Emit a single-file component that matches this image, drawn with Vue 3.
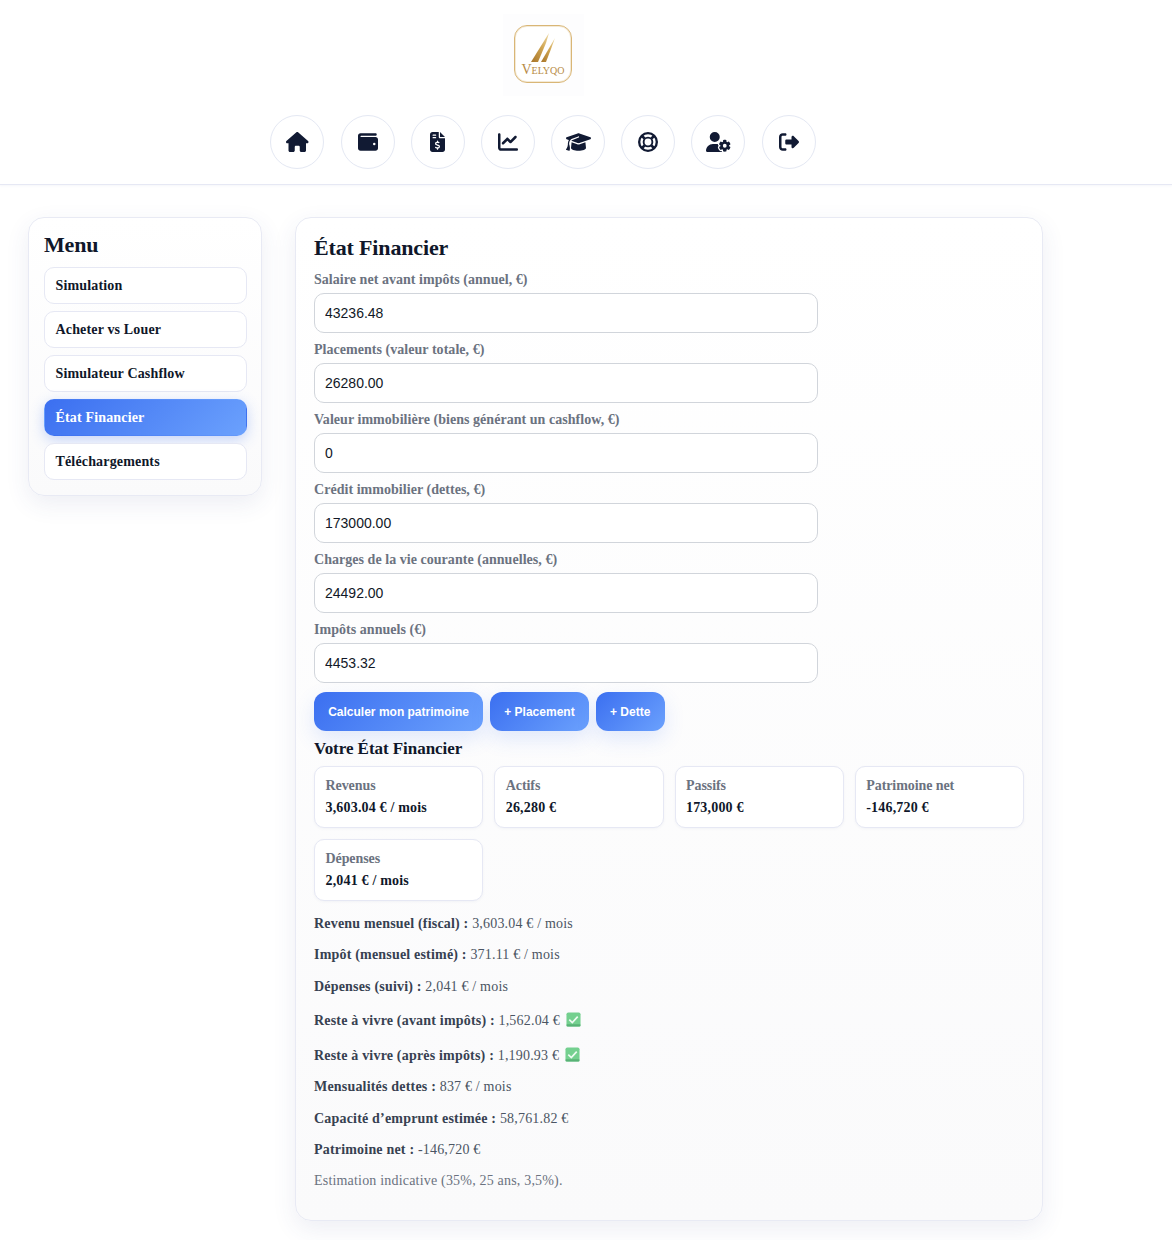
<template>
  <div class="page">
    <header class="header">
      <div class="logo">
        <div class="logo-mark">
          <svg class="logo-slashes" viewBox="0 0 24 29">
            <defs>
              <linearGradient id="gold" x1="0" y1="1" x2="1" y2="0">
                <stop offset="0" stop-color="#a8752a" />
                <stop offset="0.55" stop-color="#cfa450" />
                <stop offset="1" stop-color="#f0dca8" />
              </linearGradient>
            </defs>
            <polygon points="0,29 18,0 15,10 7,29" fill="url(#gold)" />
            <polygon points="10,29 24,5 20,16 15,29" fill="url(#gold)" />
          </svg>
          <span class="logo-text">Velyqo</span>
        </div>
      </div>
      <nav class="nav">
        <a v-for="icon in icons" :key="icon.name" class="nav-btn" :title="icon.name">
          <svg :viewBox="icon.box" class="nav-icon">
            <path v-if="icon.d" :d="icon.d" fill="currentColor" />
            <g v-else fill="none" stroke="currentColor">
              <circle cx="256" cy="256" r="226" stroke-width="60" />
              <circle cx="256" cy="256" r="112" stroke-width="48" />
              <path d="M90 90L170 170M422 90L342 170M90 422L170 342M422 422L342 342" stroke-width="70" />
            </g>
          </svg>
        </a>
      </nav>
    </header>

    <div class="layout">
      <aside class="sidebar">
        <h2>Menu</h2>
        <button
          v-for="item in menu"
          :key="item"
          class="menu-item"
          :class="{ active: item === current }"
          @click="current = item"
        >
          {{ item }}
        </button>
      </aside>

      <main class="panel">
        <h2>État Financier</h2>
        <div class="form">
          <div v-for="field in fields" :key="field.label" class="field">
            <label>{{ field.label }}</label>
            <input v-model="field.value" type="text" />
          </div>
        </div>
        <div class="actions">
          <button>Calculer mon patrimoine</button>
          <button>+ Placement</button>
          <button>+ Dette</button>
        </div>

        <h3>Votre État Financier</h3>
        <div class="stats">
          <div v-for="stat in stats" :key="stat.label" class="stat">
            <div class="stat-label">{{ stat.label }}</div>
            <div class="stat-value">{{ stat.value }}</div>
          </div>
        </div>

        <p v-for="row in rows" :key="row.label" class="row" :class="{ checked: row.ok }">
          <strong>{{ row.label }} :</strong> {{ row.value }}
          <svg v-if="row.ok" class="check" viewBox="0 0 16 16">
            <rect x="0.5" y="0.5" width="15" height="15" rx="2" fill="#74d08f" />
            <rect x="0.5" y="13" width="15" height="2.5" rx="1" fill="#58b276" />
            <path d="M3.5 8.2L6.7 11.2L12.5 5" fill="none" stroke="#eefbf2" stroke-width="1.8" />
          </svg>
        </p>
        <p class="row note">Estimation indicative (35%, 25 ans, 3,5%).</p>
      </main>
    </div>
  </div>
</template>

<script setup>
import { ref, reactive } from "vue";

const icons = [
  {
    name: "Accueil",
    box: "0 0 576 512",
    d: "M575.8 255.5c0 18-15 32.1-32 32.1h-32l.7 160.2c0 2.7-.2 5.4-.5 8.1V472c0 22.1-17.9 40-40 40H456c-1.1 0-2.2 0-3.3-.1c-1.4 .1-2.8 .1-4.2 .1H416 392c-22.1 0-40-17.9-40-40V448 384c0-17.7-14.3-32-32-32H256c-17.7 0-32 14.3-32 32v64 24c0 22.1-17.9 40-40 40H160 128.1c-1.5 0-3-.1-4.5-.2c-1.2 .1-2.4 .2-3.6 .2H104c-22.1 0-40-17.9-40-40V360c0-.9 0-1.9 .1-2.8V287.6H32c-18 0-32-14-32-32.1c0-9 3-17 10-24L266.4 8c7-7 15-8 22-8s15 2 21 7L564.8 231.5c8 7 12 15 11 24z",
  },
  {
    name: "Portefeuille",
    box: "0 0 512 512",
    d: "M64 32C28.7 32 0 60.7 0 96V416c0 35.3 28.7 64 64 64H448c35.3 0 64-28.7 64-64V192c0-35.3-28.7-64-64-64H80c-8.8 0-16-7.2-16-16s7.2-16 16-16H448c17.7 0 32-14.3 32-32s-14.3-32-32-32H64zM416 272a32 32 0 1 1 0 64 32 32 0 1 1 0-64z",
  },
  {
    name: "Factures",
    box: "0 0 384 512",
    d: "M64 0C28.7 0 0 28.7 0 64V448c0 35.3 28.7 64 64 64H320c35.3 0 64-28.7 64-64V160H256c-17.7 0-32-14.3-32-32V0H64zM256 0V128H384L256 0zM64 80c0-8.8 7.2-16 16-16h64c8.8 0 16 7.2 16 16s-7.2 16-16 16H80c-8.8 0-16-7.2-16-16zm0 64c0-8.8 7.2-16 16-16h64c8.8 0 16 7.2 16 16s-7.2 16-16 16H80c-8.8 0-16-7.2-16-16zm128 72c8.8 0 16 7.2 16 16v17.3c8.5 1.2 16.7 3.1 24.1 5.1c8.5 2.3 13.6 11 11.3 19.6s-11 13.6-19.6 11.3c-11.1-3-22-5.2-32.1-5.3c-8.4-.1-17.4 1.8-23.6 5.5c-5.7 3.4-8.1 7.3-8.1 12.8c0 3.7 1.3 6.5 7.3 10.1c6.9 4.1 16.6 7.1 29.2 10.9l.5 .1 0 0 0 0c11.3 3.4 25.3 7.6 36.3 14.6c12.1 7.6 22.4 19.7 22.7 38.2c.3 19.3-9.6 33.3-22.9 41.6c-7.7 4.8-16.4 7.6-25.1 9.1V440c0 8.8-7.2 16-16 16s-16-7.2-16-16V422.2c-11.2-2.1-21.7-5.7-30.9-8.9l0 0c-2.1-.7-4.2-1.4-6.2-2.1c-8.4-2.8-12.9-11.9-10.1-20.2s11.9-12.9 20.2-10.1c2.5 .8 4.8 1.6 7.1 2.4l0 0 0 0 0 0c13.6 4.6 24.6 8.4 36.3 8.7c9.1 .3 17.9-1.7 23.7-5.3c5.1-3.2 7.9-7.3 7.8-14c-.1-4.6-1.8-7.8-7.7-11.6c-6.8-4.3-16.5-7.4-29-11.2l-1.6-.5 0 0c-11-3.3-24.3-7.3-34.8-13.7c-12-7.2-22.6-18.9-22.7-37.3c-.1-19.4 10.8-32.8 23.8-40.5c7.5-4.4 15.8-7.2 24.1-8.7V232c0-8.8 7.2-16 16-16z",
  },
  {
    name: "Graphiques",
    box: "0 0 512 512",
    d: "M64 64c0-17.7-14.3-32-32-32S0 46.3 0 64V400c0 44.2 35.8 80 80 80H480c17.7 0 32-14.3 32-32s-14.3-32-32-32H80c-8.8 0-16-7.2-16-16V64zm406.6 86.6c12.5-12.5 12.5-32.8 0-45.3s-32.8-12.5-45.3 0L320 210.7l-57.4-57.4c-12.5-12.5-32.8-12.5-45.3 0l-112 112c-12.5 12.5-12.5 32.8 0 45.3s32.8 12.5 45.3 0L240 221.3l57.4 57.4c12.5 12.5 32.8 12.5 45.3 0l128-128z",
  },
  {
    name: "Formation",
    box: "0 0 640 512",
    d: "M320 32c-8.1 0-16.1 1.4-23.7 4.1L15.8 137.4C6.3 140.9 0 149.9 0 160s6.3 19.1 15.8 22.6l57.9 20.9C57.3 229.3 48 259.8 48 291.9v28.1c0 28.4-10.8 57.7-22.3 80.8c-6.5 13-13.9 25.8-22.5 37.6C0 442.7-.9 448.3 .9 453.4s6 8.9 11.2 10.2l64 16c4.2 1.1 8.7 .3 12.4-2s6.3-6.1 7.1-10.4c8.6-42.8 4.3-81.2-2.1-108.7C90.3 344.3 86 329.8 80 316.5V291.9c0-30.2 10.2-58.7 27.9-81.5c12.9-15.5 29.6-28 49.2-35.7l157-61.7c8.2-3.2 17.5 .8 20.7 9s-.8 17.5-9 20.7l-157 61.7c-12.4 4.9-23.3 12.4-32.2 21.6l159.6 57.6c7.6 2.7 15.6 4.1 23.7 4.1s16.1-1.4 23.7-4.1L624.2 182.6c9.5-3.4 15.8-12.5 15.8-22.6s-6.3-19.1-15.8-22.6L343.7 36.1C336.1 33.4 328.1 32 320 32zM128 408c0 35.3 86 72 192 72s192-36.7 192-72L496.7 262.6 354.5 314c-11.1 4-22.8 6-34.5 6s-23.5-2-34.5-6L143.3 262.6 128 408z",
  },
  { name: "Aide", box: "0 0 512 512" },
  {
    name: "Compte",
    box: "0 0 640 512",
    d: "M224 0a128 128 0 1 1 0 256A128 128 0 1 1 224 0zM178.3 304h91.4c11.8 0 23.4 1.2 34.5 3.3c-2.1 18.5 7.4 35.6 21.8 44.8c-16.6 10.6-26.7 31.6-20 53.3c4 12.9 9.4 25.5 16.4 37.6s15.2 23.1 24.4 33c15.7 16.9 39.6 18.4 57.2 8.7v.9c0 9.2 2.7 18.5 7.9 26.3H29.7C13.3 512 0 498.7 0 482.3C0 383.8 79.8 304 178.3 304zM436 218.2c0-7 4.5-13.3 11.3-14.8c10.5-2.4 21.5-3.7 32.7-3.7s22.2 1.3 32.7 3.7c6.8 1.5 11.3 7.8 11.3 14.8v30.6c7.9 3.4 15.4 7.7 22.3 12.8l24.9-14.3c6.1-3.5 13.7-2.7 18.5 2.4c7.6 8.1 14.3 17.2 20.1 27.2s10.3 20.4 13.5 31c2.1 6.7-1.1 13.7-7.2 17.2l-25 14.4c.4 4 .7 8.1 .7 12.3s-.2 8.2-.7 12.3l25 14.4c6.1 3.5 9.2 10.5 7.2 17.2c-3.3 10.6-7.8 21-13.5 31s-12.5 19.1-20.1 27.2c-4.8 5.1-12.5 5.9-18.5 2.4l-24.9-14.3c-6.9 5.1-14.3 9.4-22.3 12.8l0 30.6c0 7-4.5 13.3-11.3 14.8c-10.5 2.4-21.5 3.7-32.7 3.7s-22.2-1.3-32.7-3.7c-6.8-1.5-11.3-7.8-11.3-14.8V454.8c-8-3.4-15.6-7.7-22.5-12.9l-24.7 14.3c-6.1 3.5-13.7 2.7-18.5-2.4c-7.6-8.1-14.3-17.2-20.1-27.2s-10.3-20.4-13.5-31c-2.1-6.7 1.1-13.7 7.2-17.2l24.8-14.3c-.4-4.1-.7-8.2-.7-12.4s.2-8.3 .7-12.4L343.8 325c-6.1-3.5-9.2-10.5-7.2-17.2c3.3-10.6 7.7-21 13.5-31s12.5-19.1 20.1-27.2c4.8-5.1 12.4-5.9 18.5-2.4l24.8 14.3c6.9-5.1 14.5-9.4 22.5-12.9V218.2zm92.1 133.5a48.1 48.1 0 1 0 -96.1 0 48.1 48.1 0 1 0 96.1 0z",
  },
  {
    name: "Déconnexion",
    box: "0 0 512 512",
    d: "M377.9 105.9L500.7 228.7c7.2 7.2 11.3 17.1 11.3 27.3s-4.1 20.1-11.3 27.3L377.9 406.1c-6.4 6.4-15 9.9-24 9.9c-18.7 0-33.9-15.2-33.9-33.9l0-62.1-128 0c-17.7 0-32-14.3-32-32l0-64c0-17.7 14.3-32 32-32l128 0 0-62.1c0-18.7 15.2-33.9 33.9-33.9c9 0 17.6 3.6 24 9.9zM160 96L96 96c-17.7 0-32 14.3-32 32l0 256c0 17.7 14.3 32 32 32l64 0c17.7 0 32 14.3 32 32s-14.3 32-32 32l-64 0c-53 0-96-43-96-96L0 128C0 75 43 32 96 32l64 0c17.7 0 32 14.3 32 32s-14.3 32-32 32z",
  },
];

const menu = ["Simulation", "Acheter vs Louer", "Simulateur Cashflow", "État Financier", "Téléchargements"];
const current = ref("État Financier");

const fields = reactive([
  { label: "Salaire net avant impôts (annuel, €)", value: "43236.48" },
  { label: "Placements (valeur totale, €)", value: "26280.00" },
  { label: "Valeur immobilière (biens générant un cashflow, €)", value: "0" },
  { label: "Crédit immobilier (dettes, €)", value: "173000.00" },
  { label: "Charges de la vie courante (annuelles, €)", value: "24492.00" },
  { label: "Impôts annuels (€)", value: "4453.32" },
]);

const stats = [
  { label: "Revenus", value: "3,603.04 € / mois" },
  { label: "Actifs", value: "26,280 €" },
  { label: "Passifs", value: "173,000 €" },
  { label: "Patrimoine net", value: "-146,720 €" },
  { label: "Dépenses", value: "2,041 € / mois" },
];

const rows = [
  { label: "Revenu mensuel (fiscal)", value: "3,603.04 € / mois" },
  { label: "Impôt (mensuel estimé)", value: "371.11 € / mois" },
  { label: "Dépenses (suivi)", value: "2,041 € / mois" },
  { label: "Reste à vivre (avant impôts)", value: "1,562.04 €", ok: true },
  { label: "Reste à vivre (après impôts)", value: "1,190.93 €", ok: true },
  { label: "Mensualités dettes", value: "837 € / mois" },
  { label: "Capacité d’emprunt estimée", value: "58,761.82 €" },
  { label: "Patrimoine net", value: "-146,720 €" },
];
</script>

<style>
body {
  background: #fff;
}
</style>

<style scoped>
.page {
  font-family: "Liberation Serif", "Times New Roman", serif;
  color: #0f172a;
  padding-bottom: 19px;
}

.header {
  display: flex;
  flex-direction: column;
  align-items: center;
  padding: 14px 86px 15px 0;
  border-bottom: 1px solid #e6e8f4;
  box-shadow: 0 1px 2px rgba(90, 100, 170, 0.06);
}

.logo {
  width: 81px;
  height: 82px;
  box-sizing: border-box;
  padding-bottom: 2px;
  display: flex;
  align-items: center;
  justify-content: center;
  background: #fdfdfe;
}

.logo-mark {
  width: 58px;
  height: 58px;
  box-sizing: border-box;
  border: 1px solid #d9b676;
  border-radius: 13px;
  background: #fff;
  display: flex;
  flex-direction: column;
  align-items: center;
  box-shadow: inset 0 0 0 1px rgba(220, 185, 124, 0.3);
}

.logo-slashes {
  width: 24px;
  height: 29px;
  margin-top: 7px;
}

.logo-text {
  font-size: 14px;
  line-height: 12px;
  margin-top: 2px;
  color: #b78b45;
  font-variant: small-caps;
}

.nav {
  display: flex;
  gap: 16.17px;
  margin-top: 19px;
}

.nav-btn {
  width: 54px;
  height: 54px;
  box-sizing: border-box;
  border: 1px solid #e4e8f3;
  border-radius: 50%;
  background: #fff;
  display: flex;
  align-items: center;
  justify-content: center;
  color: #111a33;
}

.nav-icon {
  height: 20px;
  display: block;
}

.layout {
  display: flex;
  align-items: flex-start;
  gap: 33px;
  padding: 32px 0 0 28px;
}

.sidebar,
.panel {
  box-sizing: border-box;
  background: linear-gradient(180deg, #ffffff 0%, #fafafb 100%);
  border: 1px solid #e8eaf4;
  box-shadow: 0 8px 24px rgba(60, 70, 130, 0.09);
}

.sidebar {
  width: 234px;
  padding: 14px 14px 15px 15px;
  border-radius: 16px;
  display: flex;
  flex-direction: column;
  gap: 7px;
}

.sidebar h2 {
  margin: 0 0 3px;
  font-size: 22px;
  line-height: 25px;
  letter-spacing: -0.2px;
}

.menu-item {
  height: 37px;
  box-sizing: border-box;
  padding: 0 10.5px;
  text-align: left;
  font-family: inherit;
  font-size: 14px;
  font-weight: 700;
  letter-spacing: 0.16px;
  color: #0f172a;
  background: #fff;
  border: 1px solid #e6e8f4;
  border-radius: 10px;
  cursor: pointer;
}

.menu-item.active {
  color: #fff;
  border-color: transparent;
  background: linear-gradient(135deg, #3b6ff0 0%, #6ba1fd 100%);
  box-shadow: 0 4px 14px rgba(59, 111, 240, 0.28);
}

.panel {
  width: 748px;
  padding: 17px 18px 30px;
  border-radius: 16px;
}

.panel h2 {
  margin: 0;
  font-size: 22px;
  line-height: 26px;
  letter-spacing: -0.15px;
}

.form {
  margin-top: 11px;
  display: flex;
  flex-direction: column;
  gap: 9px;
}

.field {
  display: flex;
  flex-direction: column;
  gap: 5px;
}

.field label {
  font-size: 14px;
  line-height: 16px;
  font-weight: 700;
  letter-spacing: 0.04px;
  color: #6b7280;
}

.field input {
  width: 504px;
  height: 40px;
  box-sizing: border-box;
  padding: 0 10px;
  font-family: "Liberation Sans", Arial, sans-serif;
  font-size: 14px;
  color: #111827;
  background: #fff;
  border: 1px solid #d1d5db;
  border-radius: 10px;
  outline: none;
}

.actions {
  display: flex;
  gap: 7px;
  margin-top: 9px;
}

.actions button {
  height: 39px;
  padding: 0 14.2px;
  font-family: "Liberation Sans", Arial, sans-serif;
  font-size: 12px;
  font-weight: 700;
  color: #fff;
  background: linear-gradient(135deg, #3b6ff0 0%, #6ba1fd 100%);
  border: none;
  border-radius: 12px;
  box-shadow: 0 8px 20px rgba(59, 111, 240, 0.15);
  cursor: pointer;
}

.panel h3 {
  margin: 8px 0 7px;
  font-size: 17px;
  line-height: 20px;
  letter-spacing: -0.05px;
}

.stats {
  display: grid;
  grid-template-columns: repeat(4, 1fr);
  gap: 11px;
}

.stat {
  box-sizing: border-box;
  height: 62px;
  padding: 11px 10.5px;
  background: #fff;
  border: 1px solid #e6e8f4;
  border-radius: 10px;
  box-shadow: 0 1px 3px rgba(60, 70, 130, 0.05);
}

.stat-label {
  font-size: 14px;
  line-height: 16px;
  font-weight: 700;
  letter-spacing: -0.08px;
  color: #6b7280;
}

.stat-value {
  margin-top: 6px;
  font-size: 14px;
  line-height: 16px;
  font-weight: 700;
  letter-spacing: 0.18px;
  color: #0f172a;
}

.row {
  margin: 14px 0 0;
  font-size: 14px;
  line-height: 17.3px;
  letter-spacing: 0.19px;
  color: #4b5563;
}

.row.checked {
  padding-top: 2px;
  line-height: 20px;
}

.row.checked + .row.checked {
  margin-top: 13px;
}

.row.checked + .row:not(.checked) {
  margin-top: 12.5px;
}

.row strong {
  color: #374151;
}

.check {
  width: 15px;
  height: 15px;
  margin-left: 2px;
  vertical-align: -2px;
}

.row.note {
  color: #6b7280;
}
</style>
